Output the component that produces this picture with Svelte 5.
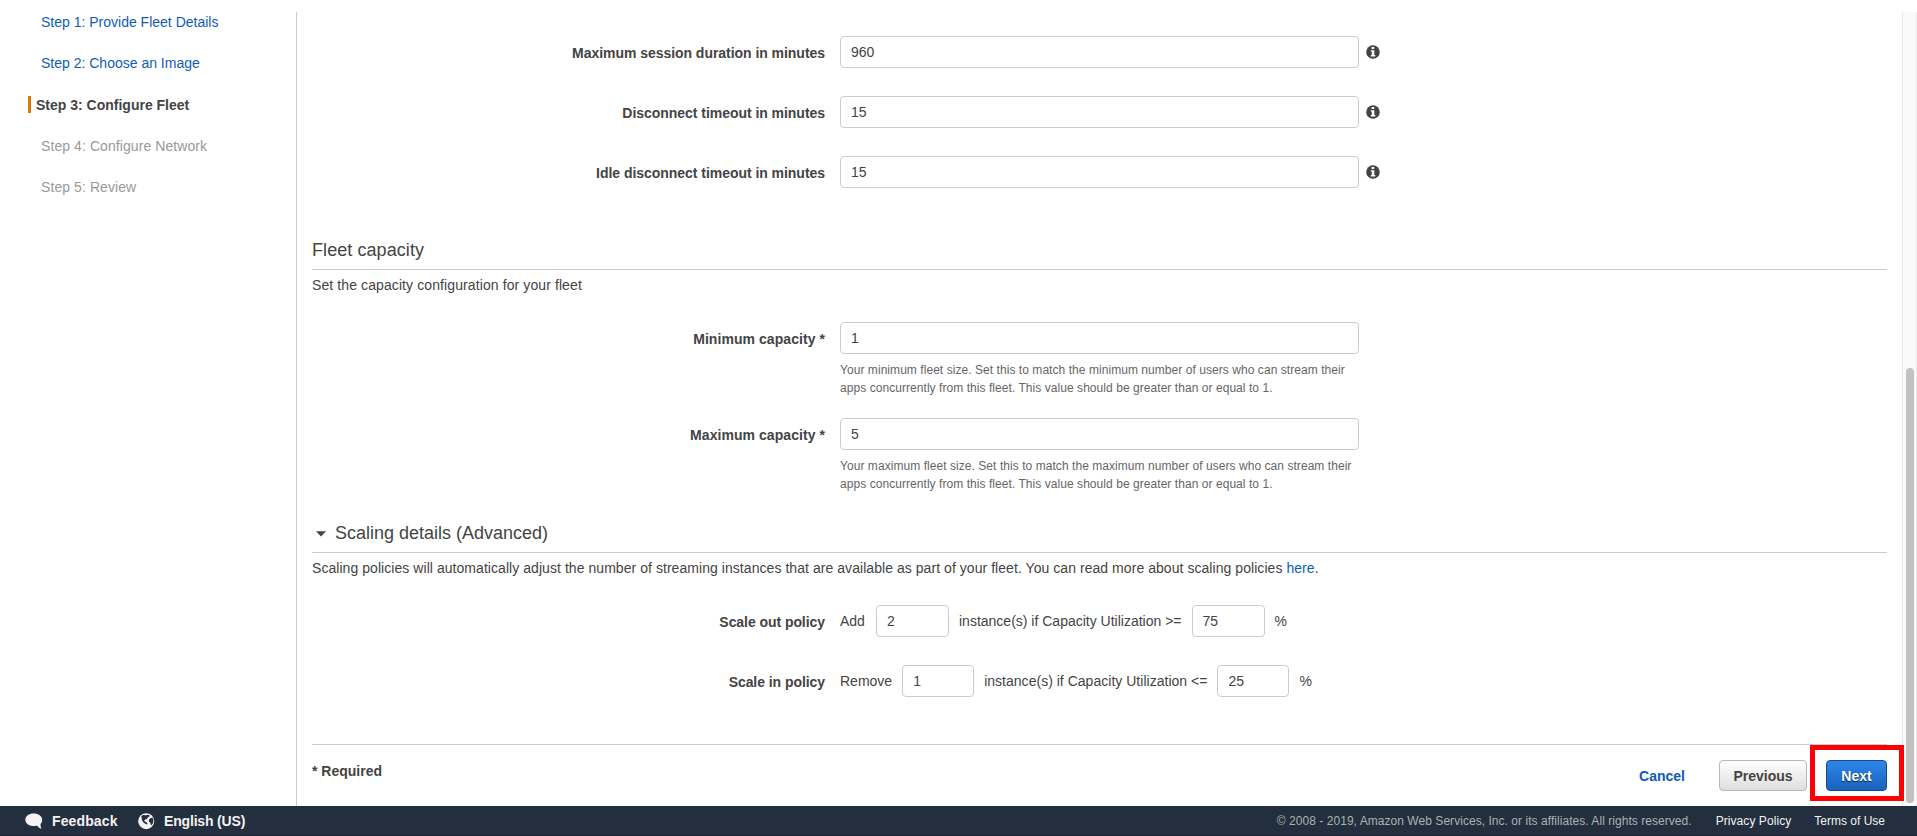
<script>
  const steps = [
    { text: 'Step 1: Provide Fleet Details', state: 'link' },
    { text: 'Step 2: Choose an Image', state: 'link' },
    { text: 'Step 3: Configure Fleet', state: 'current' },
    { text: 'Step 4: Configure Network', state: 'later' },
    { text: 'Step 5: Review', state: 'later' }
  ];
  const sessions = [
    { label: 'Maximum session duration in minutes', value: '960' },
    { label: 'Disconnect timeout in minutes', value: '15' },
    { label: 'Idle disconnect timeout in minutes', value: '15' }
  ];
  const capacities = [
    { label: 'Minimum capacity *', value: '1', word: 'minimum' },
    { label: 'Maximum capacity *', value: '5', word: 'maximum' }
  ];
  const policies = [
    { label: 'Scale out policy', verb: 'Add', count: '2', op: '>=', pct: '75' },
    { label: 'Scale in policy', verb: 'Remove', count: '1', op: '<=', pct: '25' }
  ];
</script>

<div class="page">
  <div class="body">
    <nav>
      {#each steps as s}
        <div class="step {s.state}"><span>{s.text}</span></div>
      {/each}
    </nav>
    <main>
      <section class="sessions">
        {#each sessions as f}
          <div class="row">
            <div class="lbl">{f.label}</div>
            <div class="field">{f.value}</div>
            <svg class="info" viewBox="0 0 14 14" width="14" height="14">
              <circle cx="7" cy="7" r="6.8" fill="#444" />
              <path fill="#fff" d="M5.6 2h2.6v2H5.6zM4.8 5.2h3.5v4.9h1v1.5H4.8v-1.5h1V6.6h-1z" />
            </svg>
          </div>
        {/each}
      </section>

      <h2 class="fleet">Fleet capacity</h2>
      <p class="desc">Set the capacity configuration for your fleet</p>
      <section class="caps">
        {#each capacities as c}
          <div class="row">
            <div class="lbl">{c.label}</div>
            <div>
              <div class="field">{c.value}</div>
              <p class="help">Your {c.word} fleet size. Set this to match the {c.word} number of users who can stream their<br />apps concurrently from this fleet. This value should be greater than or equal to 1.</p>
            </div>
          </div>
        {/each}
      </section>

      <h2 class="scaling">
        <svg viewBox="0 0 10 6" width="10" height="6"><path d="M0 0.3H10L5 5.5Z" fill="#444" /></svg>
        <span>Scaling details (Advanced)</span>
      </h2>
      <p class="desc long">Scaling policies will automatically adjust the number of streaming instances that are available as part of your fleet. You can read more about scaling policies <span class="here">here</span>.</p>
      <section class="policies">
        {#each policies as p}
          <div class="row">
            <div class="lbl">{p.label}</div>
            <span class="verb">{p.verb}</span>
            <div class="field small">{p.count}</div>
            <span>instance(s) if Capacity Utilization {p.op}</span>
            <div class="field small">{p.pct}</div>
            <span>%</span>
          </div>
        {/each}
      </section>

      <div class="actions">
        <b class="required">* Required</b>
        <span class="cancel">Cancel</span>
        <button class="prev">Previous</button>
        <div class="next-wrap">
          <button class="next">Next</button>
          <div class="mark"></div>
        </div>
      </div>
    </main>
    <div class="track"><div class="thumb"></div></div>
  </div>
  <footer>
    <svg class="bubble" viewBox="0 0 18 17" width="18" height="17">
      <path fill="#f4f4f4" d="M8.6 0.5C3.8 0.5 0.3 3.2 0.3 6.800s3.500 6.300 8.300 6.300c1.300 0 2.400-.1 3.400-.5 1 1.600 2.400 2.700 4.700 3.200-.9-1.200-1.300-2.700-1.100-4.800C16.700 9.900 17.200 8.500 17.200 6.800c0-3.600-3.800-6.300-8.600-6.300z" />
    </svg>
    <b class="feedback">Feedback</b>
    <svg class="globe" viewBox="0 0 17 17" width="17" height="17">
      <circle cx="8.200" cy="8.200" r="8" fill="#f4f4f4" />
      <path fill="#232f3e" d="M3.200 3.300 5 2 8 2.200 10.500 1.800 12 3 9.800 4.500 8.500 6.500 7 6.300 6.400 8.200 8.800 9.600 9.600 10.800 8.600 11.400 5.800 9.700 4 7.500 3.800 5.500zM12.300 5.200 14.500 4.600 15.500 7.500 14.800 10.500 13 12.600 12.300 9.800 10.800 8.500 11 6.500z" />
    </svg>
    <b class="lang">English (US)</b>
    <span class="copy">© 2008 - 2019, Amazon Web Services, Inc. or its affiliates. All rights reserved.</span>
    <span class="privacy">Privacy Policy</span>
    <span class="terms">Terms of Use</span>
  </footer>
</div>

<style>
  :global(body) { margin: 0; background: #fff; overflow: hidden; }
  .page {
    height: 836px; display: flex; flex-direction: column;
    font: 14px/20px "Liberation Sans", Arial, sans-serif; color: #444;
  }
  .page * { box-sizing: border-box; }
  .body { display: flex; height: 806px; }
  p, h2 { margin: 0; }
  nav { width: 296px; padding-top: 12px; }
  .step { height: 41.2px; padding-left: 41px; white-space: nowrap; }
  .link, .here { color: #0f5cb5; }
  .later { color: #999; letter-spacing: 0.08px; position: relative; top: -2px; }
  .current { padding-left: 28px; font-weight: bold; }
  .current span { display: block; height: 17px; line-height: 19px; margin-top: 2px; border-left: 3px solid #e07700; padding-left: 5px; }
  main { flex: 1; margin-top: 12px; border-left: 1px solid #ccc; padding: 24px 15px 0; }
  .row { display: flex; align-items: flex-start; white-space: nowrap; }
  .lbl { width: 513px; margin-right: 15px; text-align: right; font-weight: bold; padding-top: 7px; line-height: 20px; }
  .sessions .lbl { letter-spacing: -0.04px; }
  .caps .lbl { letter-spacing: 0.06px; }
  .policies .lbl { letter-spacing: -0.06px; }
  .field { width: 519px; height: 32px; border: 1px solid #ccc; border-radius: 4px; padding: 5px 10px; line-height: 20px; }
  .info { margin: 9px 0 0 7px; }
  .sessions { display: flex; flex-direction: column; gap: 28px; height: 202px; }
  h2 { font-size: 18px; line-height: 24px; font-weight: normal; border-bottom: 1px solid #ccc; height: 32px; }
  .fleet { letter-spacing: 0.07px; }
  .desc { line-height: 20px; margin-top: 5px; white-space: nowrap; letter-spacing: 0.1px; }
  .long { letter-spacing: 0.054px; }
  .caps { margin-top: 27px; }
  .caps .row { height: 96px; }
  .help { margin-top: 7px; font-size: 12px; line-height: 18px; color: #666; letter-spacing: 0.055px; }
  .scaling { display: flex; margin-top: 7px; }
  .scaling svg { margin: 10px 9px 0 4px; }
  .policies { margin-top: 27px; height: 139px; display: flex; flex-direction: column; gap: 28px; }
  .policies span { margin-top: 6px; }
  .row:first-child .verb { width: 26px; }
  .field.small { width: 73px; margin: 0 10px; }
  .row:last-child .field.small { width: 72px; }
  .row:last-child span:nth-child(4) { letter-spacing: 0.02px; }
  .actions { border-top: 1px solid #ccc; height: 61px; display: flex; align-items: flex-start; }
  .required { margin: 16px auto 0 0; }
  .cancel { font-weight: bold; color: #0f5cb5; margin: 21px 34px 0 0; }
  button { font: bold 14px/20px "Liberation Sans", Arial, sans-serif; height: 31px; padding: 0; border-radius: 4px; display: block; }
  .prev { width: 88px; margin: 15px 19px 0 0; color: #444; border: 1px solid #b8b8b8; background: linear-gradient(#fff, #dedede); }
  .next-wrap { position: relative; margin-top: 15px; }
  .next { width: 61px; color: #fff; border: 1px solid #164a8a; background: linear-gradient(#2f86e8, #1863bd); text-shadow: 0 1px 1px #123; }
  .mark { position: absolute; left: -16px; top: -15px; width: 94px; height: 56px; border: 5px solid #f00; }
  .track { width: 15px; margin-top: 12px; border-left: 1px solid #e8e8e8; border-right: 1px solid #ededed; background: #fafafa; padding: 356px 0 0 3px; }
  .thumb { width: 8px; height: 435px; border-radius: 4px; background: #c1c1c1; }
  footer { height: 30px; background: #232f3e; border-bottom: 1px solid #1b2431; display: flex; color: #f2f2f2; white-space: nowrap; font-size: 12px; line-height: 31px; }
  footer b { font-size: 14px; line-height: 30px; }
  .bubble { margin: 7px 9px 0 25px; }
  .feedback { width: 86px; letter-spacing: 0.12px; }
  .globe { margin-top: 7px; }
  .lang { margin-left: 9px; letter-spacing: -0.17px; }
  .copy { margin-left: auto; margin-right: 24px; color: #a8b3b3; letter-spacing: 0.045px; }
  .privacy { margin-right: 23px; letter-spacing: 0.07px; }
  .terms { margin-right: 32px; }
</style>
